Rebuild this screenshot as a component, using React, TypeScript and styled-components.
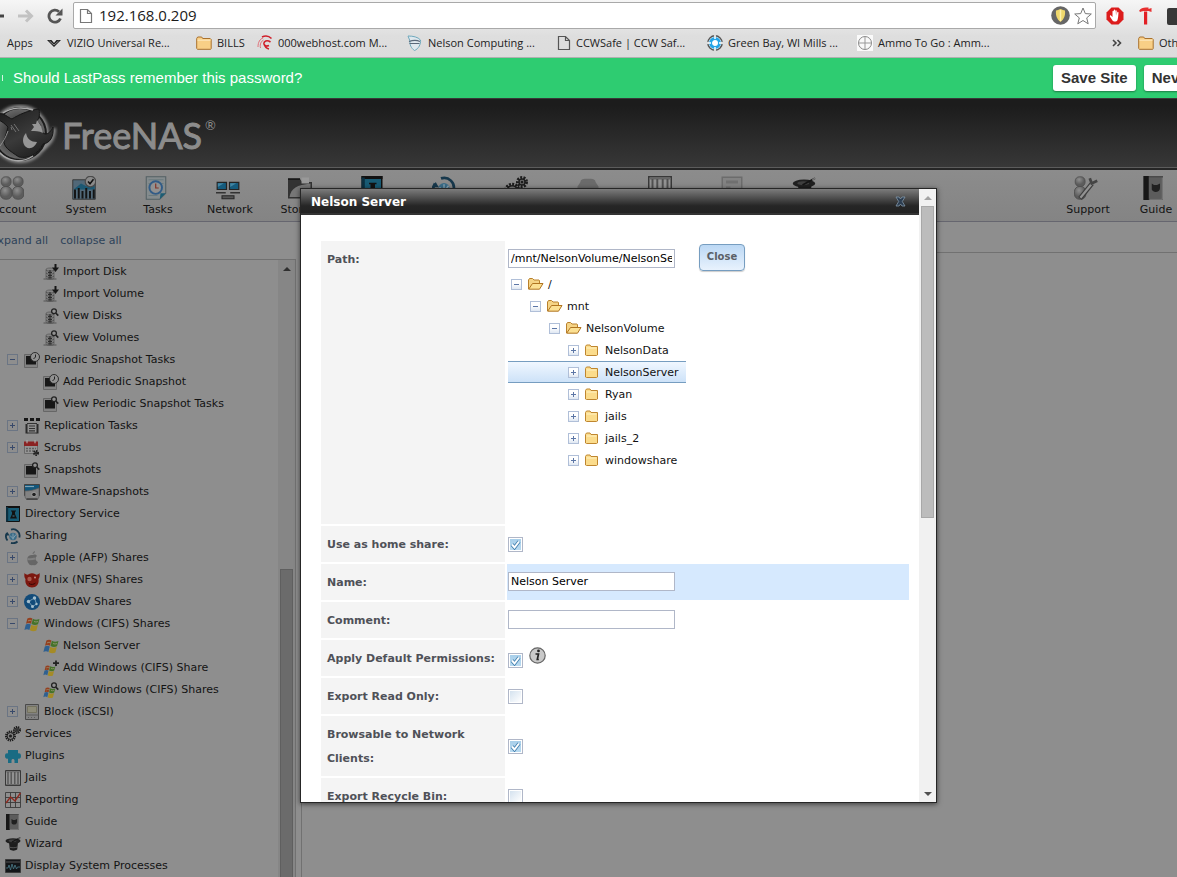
import React from 'react';
import styled, { createGlobalStyle } from 'styled-components';

const GlobalStyle = createGlobalStyle`
  *, *::before, *::after { box-sizing: border-box; }
  html, body { margin: 0; background: #8e8e8e; }
  body { overflow: hidden; font: 11px/22px Verdana, "DejaVu Sans", sans-serif; color: #131313; }
  button, input { font-family: inherit; margin: 0; }
  a { color: inherit; text-decoration: none; }
  svg { display: block; flex: none; }
`;

const Shell = styled.div`
  display: flex;
  flex-direction: column;
  min-height: 100vh;
  overflow: hidden;
`;

/* ---------- browser chrome ---------- */

const BrowserBar = styled.header`
  background: linear-gradient(#f6f6f6, #dedede 36px, #dcdcdc);
  border-bottom: 1px solid #b0b0b0;
  font-family: "Open Sans", sans-serif;
  color: #222;
`;

const NavRow = styled.div`
  display: flex;
  align-items: center;
  height: 31px;
  overflow: hidden;
`;

const NavButton = styled.button`
  border: 0;
  padding: 0;
  background: none;
  width: 29px;
  display: flex;
  justify-content: center;
  flex: none;
`;

const BackButton = styled(NavButton)`
  width: 11px;
  justify-content: flex-start;
`;

const AddressBox = styled.div`
  display: flex;
  align-items: center;
  flex: 1;
  height: 27px;
  margin-left: 4px;
  padding: 0 3px 0 5px;
  gap: 4px;
  background: #fff;
  border: 1px solid #a9a9a9;
  border-radius: 2px;
`;

const AddressInput = styled.input`
  flex: 1;
  min-width: 0;
  border: 0;
  outline: 0;
  padding: 0 0 2px 2px;
  background: none;
  font-size: 15px;
  color: #1a1a1a;
`;

const Extensions = styled.div`
  display: flex;
  align-items: center;
  gap: 14px;
  width: 81px;
  padding-left: 10px;
  overflow: hidden;
`;

const BookmarkRow = styled.nav`
  display: flex;
  align-items: center;
  height: 26px;
  padding-bottom: 2px;
  overflow: hidden;
  line-height: 20px;
`;

const Bookmark = styled.a<{ $size?: 'short' | 'wide' }>`
  display: flex;
  align-items: center;
  gap: 5px;
  flex: none;
  white-space: nowrap;
  font-size: 11px;
  width: ${p => (p.$size === 'wide' ? '150px' : p.$size === 'short' ? '61px' : 'auto')};
`;

const AppsLink = styled(Bookmark)`
  width: 46px;
  padding-left: 7px;
`;

const BookmarkTail = styled.div`
  display: flex;
  align-items: center;
  flex: none;
  margin-left: auto;
  width: 65px;
  gap: 8px;
`;

const TailDivider = styled.span`
  width: 1px;
  height: 24px;
  background: #c3c9cf;
`;

const SaveBar = styled.div`
  display: flex;
  align-items: center;
  height: 40px;
  padding-bottom: 1px;
  background: #2ecc71;
  color: #fff;
  font: 15px/20px "Liberation Sans", Arial, sans-serif;
  overflow: hidden;
`;

const SaveMark = styled.span`
  width: 3px;
  height: 6px;
  margin-right: 10px;
  border-right: 1px solid #d5f5e3;
`;

const SaveActions = styled.div`
  display: flex;
  gap: 8px;
  flex: none;
  width: 124px;
  margin-left: auto;
`;

const SaveButton = styled.button`
  flex: none;
  height: 26px;
  padding: 0 8px;
  border: 0;
  border-radius: 3px;
  background: #fff;
  box-shadow: 0 1px 2px rgba(0, 0, 0, 0.4);
  color: #333;
  font-size: 15px;
  font-weight: 700;
  white-space: nowrap;
`;

/* ---------- admin page ---------- */

const Page = styled.div`
  position: relative;
  flex: 1;
  display: flex;
  flex-direction: column;
  overflow: hidden;
`;

const Banner = styled.div`
  display: flex;
  align-items: center;
  gap: 3px;
  height: 72px;
  padding-top: 2px;
  background: linear-gradient(#1c1c1c 10%, #383838);
  border-top: 1px solid #383838;
  border-bottom: 2px solid #262626;
  box-shadow: inset 0 -1px 0 #5c5c5c;
`;

const BrandName = styled.span`
  font: 36px/44px Lato, sans-serif;
  color: #8c8c8c;
  -webkit-text-stroke: 1px #8c8c8c;
`;

const BrandMark = styled.sup`
  align-self: flex-start;
  margin-top: 14px;
  font: 13px/20px Lato, sans-serif;
  color: #8c8c8c;
`;

const Toolbar = styled.nav`
  display: flex;
  height: 52px;
  padding-top: 6px;
  margin: 0 -13px 0 -22px;
  background: linear-gradient(#8c8c8c, #848484);
  border-bottom: 1px solid #66666f;
`;

const Tool = styled.a<{ $width?: number }>`
  display: flex;
  flex-direction: column;
  align-items: center;
  gap: 2px;
  flex: none;
  width: ${p => p.$width ?? 72}px;
  line-height: 16px;
  & > svg { margin-right: 4px; }
`;

const ToolSpacer = styled.span`
  flex: 1;
`;

const Columns = styled.div`
  display: flex;
  flex: 1;
`;

const SideColumn = styled.aside`
  display: flex;
  flex-direction: column;
  width: 296px;
  flex: none;
`;

const TreeActions = styled.div`
  display: flex;
  gap: 12px;
  height: 37px;
  align-items: center;
  margin-left: -9px;
  color: #2d4259;
`;

const TreePane = styled.div`
  display: flex;
  flex: 1;
  border-top: 1px solid #707070;
  border-right: 1px solid #717171;
`;

const NavTree = styled.ul`
  flex: 1;
  min-width: 0;
  margin: 0;
  padding: 0;
  list-style: none;
`;

const NavItem = styled.li<{ $level: number }>`
  display: flex;
  align-items: center;
  height: 22px;
  padding-left: ${p => (p.$level > 1 ? 24 : 5)}px;
  white-space: nowrap;
`;

const NavLink = styled.a`
  display: flex;
  align-items: center;
  gap: 4px;
  padding-top: 2px;
`;

const Slot = styled.span`
  width: 19px;
  padding-left: 2px;
  flex: none;
`;

const ExpandButton = styled.button<{ $dim?: boolean }>`
  display: flex;
  align-items: center;
  justify-content: center;
  width: 11px;
  height: 11px;
  flex: none;
  padding: 0;
  color: ${p => (p.$dim ? '#38496a' : '#5c76a6')};
  background: ${p => (p.$dim ? '#8e8e8e' : 'linear-gradient(#ffffff 40%, #dfe7f2)')};
  border: 1px solid ${p => (p.$dim ? '#6b7584' : '#b0bfd8')};
`;

const MainColumn = styled.main`
  flex: 1;
  margin-left: 5px;
  border-left: 1px solid #717171;
`;

const TabStrip = styled.div`
  height: 31px;
  border-bottom: 1px solid #717171;
`;

/* ---------- scroll bars ---------- */

const ScrollTrack = styled.div<{ $dim?: boolean }>`
  display: flex;
  flex-direction: column;
  align-items: center;
  justify-content: space-between;
  width: 17px;
  flex: none;
  background: ${p => (p.$dim ? '#868686' : '#f1f1f1')};
  color: ${p => (p.$dim ? '#2f2f2f' : '#505050')};
`;

const ScrollArrow = styled.span<{ $down?: boolean; $faint?: boolean }>`
  display: flex;
  align-items: center;
  justify-content: center;
  height: 17px;
  &::before {
    content: "";
    border: 4px solid transparent;
    border-top-width: ${p => (p.$down ? 4 : 0)}px;
    border-bottom-width: ${p => (p.$down ? 0 : 4)}px;
    border-${p => (p.$down ? 'top' : 'bottom')}-color: ${p => (p.$faint ? '#a3a3a3' : 'currentColor')};
  }
`;

const DialogThumb = styled.span`
  width: 13px;
  height: 312px;
  margin-bottom: auto;
  background: #bcbcbc;
  border: 1px solid #a8a8a8;
`;

const TreeThumb = styled.span`
  width: 13px;
  height: 50%;
  background: #6b6b6b;
  border: 1px solid #5f5f5f;
  border-bottom: 0;
`;

/* ---------- dialog ---------- */

const Dialog = styled.section`
  position: absolute;
  top: 90px;
  left: 300px;
  display: flex;
  width: 637px;
  height: 615px;
  background: #fff;
  border: 1px solid #262626;
  box-shadow: 0 1px 5px rgba(0, 0, 0, 0.6);
`;

const DialogBody = styled.div`
  flex: 1;
  min-width: 0;
  overflow: hidden;
`;

const DialogTitle = styled.div`
  display: flex;
  align-items: center;
  justify-content: space-between;
  height: 26px;
  padding: 0 13px 0 10px;
  background: linear-gradient(#7c7c7c, #262626 70%, #222);
  border-bottom: 2px solid #333;
`;

const DialogHeading = styled.h1`
  margin: 0;
  padding-top: 2px;
  font-size: 12px;
  line-height: 22px;
  font-weight: 700;
  color: #fff;
`;

const DialogClose = styled.button`
  padding: 0;
  border: 0;
  background: none;
`;

const Form = styled.form`
  display: grid;
  gap: 2px;
  padding: 26px 10px 0 20px;
`;

const FormRow = styled.div<{ $tall?: boolean }>`
  display: grid;
  grid-template-columns: 184px 1fr;
  gap: 2px;
  min-height: ${p => (p.$tall ? 283 : 36)}px;
`;

const Label = styled.label`
  padding: 7px 6px 5px;
  background: #f4f4f4;
  color: #4f5158;
  font-weight: 700;
  line-height: 24px;
`;

const Field = styled.div<{ $active?: boolean }>`
  display: flex;
  align-items: center;
  padding-left: 1px;
  min-width: 0;
  background: ${p => (p.$active ? '#d6e9fe' : 'transparent')};
`;

const PathField = styled.div`
  padding: 3px 0 0 1px;
`;

const PathLine = styled.div`
  display: flex;
  align-items: flex-end;
  gap: 24px;
  height: 29px;
  padding-bottom: 2px;
`;

const TextInput = styled.input`
  width: 167px;
  height: 19px;
  margin-bottom: 1px;
  padding: 0 2px;
  border: 1px solid #b0b7c8;
  background: #fff;
  color: #000;
  font-size: 11px;
  outline: 0;
`;

const PathInput = styled(TextInput)`
  margin-bottom: 3px;
`;

const CloseButton = styled.button`
  width: 46px;
  height: 27px;
  padding: 0 0 2px;
  border: 1px solid #769dc0;
  border-radius: 4px;
  background: linear-gradient(#bcd8f4, #e8f2fd);
  box-shadow: 0 1px 1px rgba(0, 0, 0, 0.2);
  color: #5a5f66;
  font-size: 10px;
  font-weight: 700;
`;

const checkMark =
  "url(\"data:image/svg+xml,%3Csvg xmlns='http://www.w3.org/2000/svg' viewBox='0 0 11 11'%3E%3Cpath d='M2 5.5l2.5 3L9 2.5' fill='none' stroke='%23417fae' stroke-width='3.6'/%3E%3Cpath d='M2 5.5l2.5 3L9 2.5' fill='none' stroke='white' stroke-width='2'/%3E%3C/svg%3E\")";

const CheckBox = styled.input.attrs({ type: 'checkbox' })`
  appearance: none;
  width: 15px;
  height: 15px;
  flex: none;
  padding: 1px;
  border: 1px solid #b0b7c8;
  background: linear-gradient(135deg, #d4e2ef, #fff) content-box #fff;
  &:checked {
    background: ${checkMark} content-box, linear-gradient(#a8cfea, #b9daf0) content-box #fff;
  }
`;

const CheckWithHelp = styled.span`
  display: flex;
  align-items: flex-end;
  gap: 6px;
  height: 21px;
  margin-bottom: 1px;
  & > button { align-self: flex-start; }
`;

const HelpButton = styled.button`
  padding: 0;
  border: 0;
  background: none;
`;

const FolderTree = styled.ul`
  width: 178px;
  margin: 0;
  padding: 0;
  list-style: none;
`;

const FolderRow = styled.li<{ $level: number; $selected?: boolean }>`
  display: flex;
  align-items: center;
  height: 22px;
  padding-left: ${p => 3 + p.$level * 19}px;
  border: solid ${p => (p.$selected ? '#769dc0' : 'transparent')};
  border-width: 1px 0;
  background: ${p => (p.$selected ? 'linear-gradient(#f0f7ff, #cde2f8)' : 'none')};
  white-space: nowrap;
  color: #111;
  & > svg { margin: 0 4px 0 6px; }
`;

const FolderName = styled.span`
  padding-top: 2px;
  line-height: 18px;
`;

/* ---------- drawings ---------- */

const Svg = ({ size = 16, children }: { size?: number; children: React.ReactNode }) => (
  <svg width={size} height={size} viewBox="0 0 16 16" fill="none" aria-hidden="true">{children}</svg>
);

const discs = (
  <>
    <path d="M3 5.5c0-2 8-2 8 0V14c0 2-8 2-8 0z" fill="#858585" stroke="#5a5a5a" strokeWidth=".8" />
    <path d="M3 6c1 1.6 7 1.6 8 0M3 9c1 1.6 7 1.6 8 0M3 12c1 1.6 7 1.6 8 0" stroke="#444" strokeWidth=".8" />
    <path d="M7 6v9M5 8.5h4M5 11.5h4M5 14h4" stroke="#2d2d2d" strokeWidth="1.1" />
    <path d="M.5 15h13" stroke="#555" />
  </>
);
const lens = (
  <>
    <circle cx="11" cy="3.2" r="2.4" stroke="#222" strokeWidth="1.3" fill="#929292" />
    <path d="M12.7 5l2.6 2.6" stroke="#222" strokeWidth="1.7" />
  </>
);
const photo = (
  <>
    <path d="M.5 2.5h13v13H.5z" fill="#828282" stroke="#666" />
    <path d="M2 4h10v8.5H2z" fill="#171717" />
  </>
);
const winFlag = (
  <>
    <path d="M3.4 2.500c1.800-1 3.500-1 5 0L7 7.800C5.400 6.800 3.700 6.800 2 7.800z" fill="#94401f" />
    <path d="M8.900 2.800c2 1.200 4 1.200 6.600.2L14 8.200c-2 1-4 1-6.500-.1z" fill="#45732a" />
    <path d="M1.800 8.400c1.800-1 3.500-1 5 0L5.400 14c-1.600-1-3.400-1-5 0z" fill="#2f6090" />
    <path d="M7.300 8.800c2 1.100 4 1.100 6.500.1l-1.400 5.500c-2 1-4 1-6.500-.1z" fill="#a58b26" />
    <path d="M4 5c1.200-.8 2.500-.8 3.500-.2M10 5.500c1.500.6 2.800.6 4 0" stroke="#9f9a7c" strokeWidth=".8" />
  </>
);
const smallFlag = <g transform="translate(0 4) scale(.8)">{winFlag}</g>;
const gear = (cx: number, cy: number, r: number) => (
  <>
    <circle cx={cx} cy={cy} r={r} stroke="#1d1d1d" strokeWidth="2" strokeDasharray="1.300 .8" />
    <circle cx={cx} cy={cy} r={r - 1} fill="#7c7c7c" stroke="#1d1d1d" strokeWidth="1" />
    <circle cx={cx} cy={cy} r={r / 3} fill="#1d1d1d" />
  </>
);
const bars = (
  <>
    <path d="M.5.5h15v15H.5z" fill="#929292" stroke="#383838" />
    <path d="M1 1.800h14M1 14.600h14" stroke="#666" />
    <path d="M3 2v12M6.200 2v12M9.800 2v12M13 2v12" stroke="#505050" strokeWidth="1.300" />
  </>
);
const bookCat = (
  <>
    <path d="M1.500.5h12v15h-12z" fill="#5c5c5c" stroke="#4a4a4a" />
    <path d="M1 0h3.500v16H1z" fill="#171717" />
    <path d="M6.500 5l1.500 1h2l2-1v3c0 3-4.500 3.500-5.500 1z" fill="#202020" />
    <path d="M13.500 1v14.500H5" stroke="#7c7c7c" strokeWidth=".8" />
  </>
);
const hat = (
  <>
    <path d="M4 6h9l-.8 7.500c-2 1.500-5.500 1.500-7.400 0z" fill="#1c1c1c" />
    <ellipse cx="8" cy="5" rx="7.500" ry="2.700" fill="#202020" />
    <ellipse cx="7.500" cy="4.800" rx="4" ry="1.300" fill="#404040" />
    <path d="M7 6l8.300-4.500" stroke="#151515" strokeWidth="1.200" />
    <path d="M13.500 2.500l2-1" stroke="#777" />
    <path d="M4.300 11c2 1 5.500 1 8 0" stroke="#555" />
  </>
);
const book = (
  <>
    <path d="M1.500.5h13v15h-13z" fill="#185b74" stroke="#111" />
    <path d="M1 0h14v2H1z" fill="#111" />
    <path d="M1 1h2.200v14.500H1z" fill="#0c3040" />
    <path d="M6 4.500h5v1h-1v2.500l2 4.500H5l2-4.500V5.500H6z" fill="#121212" />
    <path d="M7.500 10h2" stroke="#3a7f98" />
  </>
);
const sharing = (
  <>
    <path d="M2.500 12.500A6.500 6.500 0 0 1 2 5M6 1.600a6.500 6.500 0 0 1 8.300 8M12.500 13.500a6.500 6.500 0 0 1-6.500 1.300" stroke="#17384c" strokeWidth="1.800" />
    <circle cx="8" cy="8.500" r="3.800" fill="#3a6c88" />
    <path d="M5 7.500l3 3 3-4M8 5.500v6" stroke="#8ba5b3" strokeWidth=".9" />
    <path d="M0 7.500h4.500L2.500 4z" fill="#17384c" />
  </>
);
const person = (x: number) => (
  <>
    <rect x={x + 0.3} y="7" width="7.600" height="8.500" rx="3.300" fill="url(#person)" stroke="#484848" strokeWidth=".5" />
    <rect x={x + 0.8} y=".5" width="6.600" height="6.500" rx="2.800" fill="url(#person)" stroke="#4c4c4c" strokeWidth=".5" />
  </>
);

const art: Record<string, React.ReactNode> = {
  importDisk: <>{discs}<path d="M12.500 0v4.500" stroke="#161616" strokeWidth="2" /><path d="M9 3.500h7L12.500 8z" fill="#161616" /></>,
  viewDisk: <>{discs}{lens}</>,
  periodic: <>{photo}<circle cx="11" cy="5" r="4.500" fill="#919191" stroke="#222" strokeWidth=".9" /><path d="M11.500 2.500V5L9.500 7" stroke="#222" /></>,
  snapshot: <>{photo}{lens}</>,
  replication: <><path d="M0 0h4v3H0zM6 0h4v3H6zM12 0h4v3h-4z" fill="#161616" /><path d="M2.500 6v9.500M13.500 6v9.500" stroke="#2b2b2b" strokeWidth="2" /><path d="M4 5.500h8V15H4z" fill="#909090" /><path d="M3 5.500h10M5 8h6M5 10.500h6M3 15h10M5 12.800h6" stroke="#333" strokeWidth="1.200" /></>,
  scrubs: <><path d="M.5 2.500h13v11H.5z" fill="#949494" stroke="#6b6b6b" /><path d="M0 1.500h14V6H0z" fill="#8b2323" /><path d="M3 .3v3M11 .3v3" stroke="#bbb" /><path d="M2 8.500h10M2 11h9" stroke="#606060" strokeWidth="1.400" strokeDasharray="2 1" />{gear(12, 13, 2)}</>,
  vmware: <><path d="M.5.500h15v11H.5z" fill="#12567a" stroke="#424242" /><path d="M1 2.500h9" stroke="#7fa3b6" strokeWidth="1.200" /><path d="M1 7c5 0 9-1 14-3v9l-1.500 2.500h-11L1 13z" fill="#828282" stroke="#5a5a5a" strokeWidth=".7" /><path d="M2.500 15h11" stroke="#333" strokeWidth="1.300" /><circle cx="10" cy="10.500" r="2.300" fill="#222" stroke="#a0a0a0" /></>,
  directory: book,
  sharing,
  apple: <><path d="M8.500 5c2-1 4-.5 4.500 1-2.500 1.500-1.500 5 1 6-1.500 3.500-3 3.500-5 3-2 .5-3.500.5-5-2.500-1.500-4-.5-8 4.500-7.500z" fill="#666" /><path d="M8.500 4c0-1.500 1-2.500 2.500-3 0 1.800-1 2.800-2.500 3z" fill="#6c6c6c" /><path d="M3.500 9c3 .5 5 .3 7.500-.5" stroke="#808080" strokeWidth="2" /></>,
  bsd: <><path d="M.5 1C2 3 4 3 5 2c2-1 4-1 6 0 1 1 3 1 4.500-1 .5 3 0 5-1 6 1 5-2.500 8.500-6.500 8.500S.500 12 1.500 7C.5 6 0 4 .5 1z" fill="#7c170f" /><circle cx="5.500" cy="7" r="2.200" fill="#a8574c" /><circle cx="11" cy="5.500" r="1" fill="#c28c84" /><path d="M5 11.500c2 1.500 5 1 6.500-.5" stroke="#350705" /></>,
  webdav: <><circle cx="8" cy="8" r="8" fill="#124b79" /><path d="M4.500 7.500l6-3.500M4.500 7.500l4 5M10.500 4l2 6-4 2.500" stroke="#7ea3bb" strokeWidth=".9" /><g fill="#a4bdcb"><circle cx="4.500" cy="7.500" r="1.700" /><circle cx="10.500" cy="4" r="1.700" /><circle cx="8.500" cy="12.500" r="1.500" /><circle cx="12.500" cy="10" r="1.200" /></g></>,
  windows: winFlag,
  winAdd: <>{smallFlag}<path d="M13 .500v5.500M10 3.200h6" stroke="#222" strokeWidth="1.800" /></>,
  winView: <>{smallFlag}{lens}</>,
  block: <><path d="M1.500.500h13v15h-13z" fill="#818181" stroke="#4a4a4a" /><path d="M3.500 2.500h9v6h-9z" fill="#8d8b78" stroke="#74725f" /><path d="M1.500 11h13M4 13.500h1M7 13.500h1M10 13.500h1" stroke="#5c5c5c" /></>,
  services: <>{gear(5.500, 10, 4.500)}{gear(12, 4, 3)}</>,
  plugins: <path d="M3 2h10v3.500c1.500-.5 3 0 3 2.500s-1.500 3-3 2.500V15H9.500v-2.500c0-2-3-2-3 0V15H3v-4.500C1.500 11 0 10.500 0 8s1.500-3 3-2.500z" fill="#196b83" />,
  jails: bars,
  reporting: <><path d="M.5.500h15v15H.5zM.5 5.500h15M.5 10.500h15M5.500.500v15M10.500.500v15" stroke="#3a3a3a" strokeWidth=".9" /><path d="M1 11l4.500-6L10 9l5.500-8" stroke="#8d2a20" strokeWidth="1.400" /></>,
  guide: bookCat,
  wizard: hat,
  processes: <><path d="M.500 1.500h15v13H.5z" fill="#131518" stroke="#3a3a3a" /><path d="M1 4h14" stroke="#555" /><path d="M1 10h2l1-3 1.500 5L7 6l1.500 5 1.500-4 1.500 4 1-2h2.500" stroke="#45717e" strokeWidth=".9" /></>,
  account: <>{person(0)}{person(8)}</>,
  system: <><path d="M.500 2.500h15v13H.5z" fill="#516878" stroke="#333" strokeWidth=".6" /><path d="M1 9l5-4 4 2 5-4v6z" fill="#1b5873" /><path d="M2 9v6M4.500 8v7M7 10v5M9.500 8v7M12 10v5M14.500 9v6" stroke="#141414" strokeWidth="1.300" /><circle cx="12.300" cy="3.700" r="3.500" fill="#8a8a8a" stroke="#4a4a4a" strokeWidth=".8" /><path d="M10.700 3.700l1.300 1.500 2.300-3" stroke="#111" /></>,
  tasks: <><path d="M1.500.500h13v11l-4 4h-9z" fill="#848b8d" stroke="#536064" strokeWidth=".7" /><path d="M3 2.500h10M3 5h10M3 13h6" stroke="#66777c" strokeWidth=".6" /><circle cx="7.800" cy="7.700" r="4.200" fill="#919191" stroke="#325c87" strokeWidth="1.300" /><path d="M7.800 5v3h2" stroke="#843427" strokeWidth=".8" /><path d="M10.500 15.500l.5-4h3.500z" fill="#1c5d75" /></>,
  network: <><path d="M.800 4.300h6.200v4.700H.8zM9 4.300h6.200V9H9z" fill="#155b7d" stroke="#242424" strokeWidth=".8" /><path d="M1.200 4.800h4l-4 2.500zM9.500 4.800h4l-4 2.500z" fill="#4285a3" /><path d="M0 11.200h6.500M9.500 11.200H16" stroke="#333" strokeWidth="1" /><path d="M4 13.200h8v2H4z" fill="#555" stroke="#272727" strokeWidth=".7" /></>,
  storage: <><path d="M0 2h8l1.500 2H16v11H0z" fill="#333" /><path d="M9 1h5v4H9z" fill="#999" /><path d="M1 14C2 8 6 6 15 5v9z" fill="#777" /><path d="M0 2h8" stroke="#111" /></>,
  pluginsGray: <path d="M3 4c0-2 2-2.200 5-2.200S13 2 13 4l2 3v7H1V7z" fill="#6b6b6b" />,
  reportGray: <><path d="M1.500.8h13v13h-13z" fill="#838383" stroke="#6c6c6c" /><path d="M4 3h8v2H4zM4 7h3v3H4z" fill="#707070" /><path d="M8 8.500h5M8 10.500h5" stroke="#707070" /></>,
  support: <>{person(0)}<path d="M4 15L12 5" stroke="#3d3d3d" strokeWidth="3" /><path d="M4.300 14.500L12 5" stroke="#929292" strokeWidth="1.500" /><path d="M10.500 1.500l1.300 3.500 3.700-1.800" stroke="#444" strokeWidth="1.800" /></>,
};

const Icon = ({ name, size }: { name: string; size?: number }) => <Svg size={size}>{art[name]}</Svg>;

const Expander = ({ open, dim, label }: { open?: boolean; dim?: boolean; label: string }) => (
  <ExpandButton type="button" $dim={dim} aria-label={`${open ? 'Collapse' : 'Expand'} ${label}`}>
    <svg width="5" height="5" viewBox="0 0 5 5"><path d={open ? 'M0 2.500h5' : 'M0 2.500h5M2.500 0v5'} stroke="currentColor" /></svg>
  </ExpandButton>
);

const Folder = ({ open }: { open?: boolean }) => (
  <Svg>
    {open ? (
      <>
        <path d="M.500 13V4l1-1.500h3L6 4h5l.5.500V8" fill="#f5d486" stroke="#b9802c" />
        <path d="M.700 13.200L4.500 7.500h10.500l-3.500 5.700z" fill="#fbe093" stroke="#b07420" />
      </>
    ) : (
      <>
        <path d="M.500 13V4.500l1-1.500H5l1 1.500h6.500v8.500l-1 .5h-10z" fill="#fbdc8c" stroke="#bf862f" />
        <path d="M1.500 6h10" stroke="#fff2c4" />
      </>
    )}
  </Svg>
);

const BookmarkFolder = () => (
  <svg width="16" height="14" viewBox="0 0 16 14"><path d="M.700 2.500l1-1.500h4l1 1.500h7.500l1 1v9l-.5.800H1.500l-.8-.800z" fill="#f8cf86" stroke="#a9712d" /><path d="M1.500 4.200h13" stroke="#fde9c2" /></svg>
);

const PageIcon = ({ color = '#555' }: { color?: string }) => (
  <svg width="14" height="16" viewBox="0 0 14 16"><path d="M1.500 1.500h7l4 4v9h-11zM8.500 1.500v4h4" fill="none" stroke={color} strokeWidth="1.200" /></svg>
);

const Mascot = () => (
  <svg width="59" height="62" viewBox="0 0 59 62" aria-hidden="true">
    <defs>
      <radialGradient id="disc"><stop offset=".4" stopColor="#333" /><stop offset="1" stopColor="#6a6a6a" /></radialGradient>
      <linearGradient id="face" x1="0" y1="0" x2=".6" y2="1"><stop stopColor="#1b1b1b" /><stop offset=".6" stopColor="#3a3a3a" /><stop offset="1" stopColor="#222" /></linearGradient>
      <radialGradient id="person" cx=".4" cy=".3"><stop stopColor="#8f8f8f" /><stop offset="1" stopColor="#5c5c5c" /></radialGradient>
      <filter id="glow" x="-30%" y="-30%" width="160%" height="160%"><feGaussianBlur stdDeviation="1.500" /></filter>
    </defs>
    <circle cx="20" cy="30" r="27" fill="none" stroke="#929292" strokeWidth="4" filter="url(#glow)" />
    <path d="M41 45c8-4 13-10 13-21" fill="none" stroke="#8d8d8d" strokeWidth="4" filter="url(#glow)" />
    <circle cx="20" cy="30" r="26" fill="url(#disc)" stroke="#1c1c1c" strokeWidth="2" />
    <path d="M-2 10C4 8 8 14 12 15c6-4 17-9 27-10 1 7 0 9-2 12l4 5-3 2c3 2 4 5 7 6 4 0 6-3 8-7 1 10-3 16-10 17-5 10-14 15-24 13C10 47 3 43 4 36c2-5 3-9 4-13-3-3-6-6-10-7z" fill="url(#face)" stroke="#161616" />
    <path d="M37 16l4 6 2 7c-4-2-8-2-12-2l3-4-2-3 4 0z" fill="#969696" />
    <path d="M26 29c-4 4-4 11 0 14 4 3 9 0 11-5-6 0-10-3-11-9z" fill="#969696" />
    <path d="M11 21l5 7M14 20l5 7M12 26l-1-3" stroke="#737373" />
    <path d="M8 27C6 33 3 38 0 42" stroke="#8f8f8f" fill="none" />
    <path d="M-1 48c8 9 22 12 34 4" stroke="#aaa" strokeWidth="1.500" fill="none" />
    <path d="M3 9C12 3 24 3 33 6" stroke="#aaa" strokeWidth="1.500" fill="none" />
  </svg>
);

/* ---------- data ---------- */

type Node = [level: number, icon: string, label: string, state?: 'open' | 'closed'];

const navNodes: Node[] = [
  [2, 'importDisk', 'Import Disk'],
  [2, 'importDisk', 'Import Volume'],
  [2, 'viewDisk', 'View Disks'],
  [2, 'viewDisk', 'View Volumes'],
  [1, 'periodic', 'Periodic Snapshot Tasks', 'open'],
  [2, 'periodic', 'Add Periodic Snapshot'],
  [2, 'snapshot', 'View Periodic Snapshot Tasks'],
  [1, 'replication', 'Replication Tasks', 'closed'],
  [1, 'scrubs', 'Scrubs', 'closed'],
  [1, 'snapshot', 'Snapshots'],
  [1, 'vmware', 'VMware-Snapshots', 'closed'],
  [0, 'directory', 'Directory Service'],
  [0, 'sharing', 'Sharing'],
  [1, 'apple', 'Apple (AFP) Shares', 'closed'],
  [1, 'bsd', 'Unix (NFS) Shares', 'closed'],
  [1, 'webdav', 'WebDAV Shares', 'closed'],
  [1, 'windows', 'Windows (CIFS) Shares', 'open'],
  [2, 'windows', 'Nelson Server'],
  [2, 'winAdd', 'Add Windows (CIFS) Share'],
  [2, 'winView', 'View Windows (CIFS) Shares'],
  [1, 'block', 'Block (iSCSI)', 'closed'],
  [0, 'services', 'Services'],
  [0, 'plugins', 'Plugins'],
  [0, 'jails', 'Jails'],
  [0, 'reporting', 'Reporting'],
  [0, 'guide', 'Guide'],
  [0, 'wizard', 'Wizard'],
  [0, 'processes', 'Display System Processes'],
];

const tools: { icon: string; label: string; iconOnly?: boolean }[] = [
  { icon: 'account', label: 'Account' },
  { icon: 'system', label: 'System' },
  { icon: 'tasks', label: 'Tasks' },
  { icon: 'network', label: 'Network' },
  { icon: 'storage', label: 'Storage' },
  { icon: 'directory', label: 'Directory', iconOnly: true },
  { icon: 'sharing', label: 'Sharing', iconOnly: true },
  { icon: 'services', label: 'Services', iconOnly: true },
  { icon: 'pluginsGray', label: 'Plugins', iconOnly: true },
  { icon: 'jails', label: 'Jails', iconOnly: true },
  { icon: 'reportGray', label: 'Reporting', iconOnly: true },
  { icon: 'wizard', label: 'Wizard', iconOnly: true },
];

const folders: { level: number; name: string; open?: boolean; selected?: boolean }[] = [
  { level: 0, name: '/', open: true },
  { level: 1, name: 'mnt', open: true },
  { level: 2, name: 'NelsonVolume', open: true },
  { level: 3, name: 'NelsonData' },
  { level: 3, name: 'NelsonServer', selected: true },
  { level: 3, name: 'Ryan' },
  { level: 3, name: 'jails' },
  { level: 3, name: 'jails_2' },
  { level: 3, name: 'windowshare' },
];

/* ---------- sections ---------- */

const Browser = () => (
  <BrowserBar>
    <NavRow>
      <BackButton aria-label="Back"><svg width="5" height="16" viewBox="0 0 5 16"><path d="M0 8h4" stroke="#444" strokeWidth="3" /></svg></BackButton>
      <NavButton aria-label="Forward"><svg width="16" height="16" viewBox="0 0 16 16"><path d="M0 8h13M8 2.500L13.500 8 8 13.500" fill="none" stroke="#c2c2c2" strokeWidth="3" /></svg></NavButton>
      <NavButton aria-label="Reload"><svg width="16" height="16" viewBox="0 0 16 16"><path d="M13.500 10.500A6 6 0 1 1 12 3.700" fill="none" stroke="#555" strokeWidth="2.800" /><path d="M15.500.500v7h-7z" fill="#555" /></svg></NavButton>
      <AddressBox>
        <PageIcon color="#777" />
        <AddressInput aria-label="Address" defaultValue="192.168.0.209" />
        <svg width="19" height="19" viewBox="0 0 19 19"><circle cx="9.500" cy="9.500" r="9.300" fill="#666" /><path d="M9.500 3c2 1 3 1 4.500 1.500.5 5-.8 8.500-4.500 11.500C5.800 13 4.500 9.500 5 4.500c1.500-.5 2.500-.5 4.500-1.500z" fill="#f0d86c" /><path d="M9.500 4v11" stroke="#fff2ad" strokeWidth="1.500" /></svg>
        <svg width="18" height="18" viewBox="0 0 18 18"><path d="M9 1l2.300 5.600 6 .4-4.600 3.900 1.500 5.900L9 13.500l-5.200 3.300 1.500-5.900L.700 7l6-.4z" fill="#fff" stroke="#777" /></svg>
      </AddressBox>
      <Extensions>
        <svg width="18" height="18" viewBox="0 0 18 18"><path d="M5.500.500h7l5 5v7l-5 5h-7l-5-5v-7z" fill="#dc1c1c" /><path d="M5 8.500l1.500 1.500V4.500c0-1 1.300-1 1.300 0V8 3.300c0-1 1.400-1 1.400 0V8l.2-4c0-1 1.300-1 1.300 0v4.500l.5-3c.2-1 1.300-.8 1.300.2-.2 3-.3 5-1 7.300-.7 2-4 2-5 .5L4 9.800c-.4-1 .3-1.800 1-1.300z" fill="#fff" /></svg>
        <svg width="15" height="18" viewBox="0 0 15 18"><path d="M1 4c1.500-3 4-3.500 7-3.500h2.500V2l3-1v4l-3-1H8C5 4 3.500 4 2.500 5z" fill="#e83030" /><path d="M6 4.500h3.200v13H6z" fill="#e21f25" /></svg>
        <svg width="17" height="18" viewBox="0 0 17 18"><rect x="0" y="1" width="17" height="17" rx="2" fill="#383838" /></svg>
      </Extensions>
    </NavRow>
    <BookmarkRow aria-label="Bookmarks">
      <AppsLink href="#">Apps</AppsLink>
      <Bookmark href="#" $size="wide">
        <svg width="16" height="16" viewBox="0 0 16 16"><path d="M1 5h4.500L8 8l2.500-3H15l-7 7z" fill="#222" /><path d="M3.500 6L8 10l4.500-4" stroke="#bbb" strokeWidth=".7" fill="none" /></svg>
        VIZIO Universal Re...
      </Bookmark>
      <Bookmark href="#" $size="short"><BookmarkFolder />BILLS</Bookmark>
      <Bookmark href="#" $size="wide">
        <svg width="16" height="16" viewBox="0 0 16 16"><path d="M5 2c3-1.500 7-1 9.500 1.500M13.500 7C10 4.500 6.500 6 7 9c.5 2 2.500 2.500 5 1.500M7 9c1 3 3 4.500 5 5" fill="none" stroke="#d0202b" strokeWidth="1.600" /><path d="M1 12c0-5 2-8 5-9M3.500 13c-1-4 1-7 3-8" fill="none" stroke="#e07078" strokeWidth="1" /></svg>
        000webhost.com M...
      </Bookmark>
      <Bookmark href="#" $size="wide">
        <svg width="16" height="16" viewBox="0 0 16 16"><path d="M1 1c5 0 10 1 12.500 4 .5 4-2 9-6 10.500C4 13 2.500 9.500 3 6z" fill="#dfe8ee" stroke="#6fa9bd" /><path d="M2 6.500c4-1.500 8-1.500 11 0M2.500 8.500h10" stroke="#5a6879" strokeWidth="1.200" fill="none" /></svg>
        Nelson Computing ...
      </Bookmark>
      <Bookmark href="#" $size="wide"><PageIcon />CCWSafe | CCW Saf...</Bookmark>
      <Bookmark href="#" $size="wide">
        <svg width="16" height="16" viewBox="0 0 16 16"><circle cx="8" cy="8" r="7.200" fill="#fff" stroke="#555" strokeWidth="1.400" /><circle cx="8" cy="8" r="4.500" fill="none" stroke="#25a5e8" strokeWidth="3" /><path d="M8 0v4M8 12v4M0 8h4M12 8h4" stroke="#fff" strokeWidth="1.500" /></svg>
        Green Bay, WI Mills ...
      </Bookmark>
      <Bookmark href="#" $size="wide">
        <svg width="16" height="16" viewBox="0 0 16 16"><path d="M0 0h16v16H0z" fill="#fafafa" /><circle cx="8" cy="8" r="6.500" fill="none" stroke="#888" /><path d="M8 1v14M1 8h14" stroke="#999" /></svg>
        Ammo To Go : Amm...
      </Bookmark>
      <BookmarkTail>
        <svg width="10" height="8" viewBox="0 0 10 8"><path d="M1 1l3 3-3 3M5.500 1l3 3-3 3" fill="none" stroke="#444" strokeWidth="1.600" /></svg>
        <TailDivider />
        <Bookmark href="#"><BookmarkFolder />Other bookmarks</Bookmark>
      </BookmarkTail>
    </BookmarkRow>
  </BrowserBar>
);

const ShareDialog = () => (
  <Dialog role="dialog" aria-labelledby="dialog-title">
    <DialogBody>
      <DialogTitle>
        <DialogHeading id="dialog-title">Nelson Server</DialogHeading>
        <DialogClose aria-label="Close dialog">
          <svg width="11" height="11" viewBox="0 0 11 11"><path d="M1 1h3l1.500 2L7 1h3L7.300 5.500 10 10H7L5.500 8 4 10H1l2.700-4.500z" fill="#2c3d50" stroke="#8297aa" strokeWidth=".8" /></svg>
        </DialogClose>
      </DialogTitle>
      <Form>
        <FormRow $tall>
          <Label htmlFor="path">Path:</Label>
          <PathField>
            <PathLine>
              <PathInput id="path" defaultValue="/mnt/NelsonVolume/NelsonServer" />
              <CloseButton type="button">Close</CloseButton>
            </PathLine>
            <FolderTree>
              {folders.map(f => (
                <FolderRow key={f.name} $level={f.level} $selected={f.selected}>
                  <Expander open={f.open} label={f.name} />
                  <Folder open={f.open} />
                  <FolderName>{f.name}</FolderName>
                </FolderRow>
              ))}
            </FolderTree>
          </PathField>
        </FormRow>
        <FormRow>
          <Label htmlFor="home">Use as home share:</Label>
          <Field><CheckBox id="home" defaultChecked /></Field>
        </FormRow>
        <FormRow>
          <Label htmlFor="name">Name:</Label>
          <Field $active><TextInput id="name" defaultValue="Nelson Server" /></Field>
        </FormRow>
        <FormRow>
          <Label htmlFor="comment">Comment:</Label>
          <Field><TextInput id="comment" /></Field>
        </FormRow>
        <FormRow>
          <Label htmlFor="permissions">Apply Default Permissions:</Label>
          <Field>
            <CheckWithHelp>
              <CheckBox id="permissions" defaultChecked />
              <HelpButton type="button" aria-label="Help">
                <svg width="17" height="17" viewBox="0 0 17 17"><circle cx="8.500" cy="8.500" r="7.700" fill="#c9c9c9" stroke="#666" strokeWidth="1.200" /><circle cx="9.500" cy="3.900" r="1.400" fill="#222" /><path d="M6.500 7h3L8.300 12.500h1.500" fill="none" stroke="#222" strokeWidth="1.700" /></svg>
              </HelpButton>
            </CheckWithHelp>
          </Field>
        </FormRow>
        <FormRow>
          <Label htmlFor="readonly">Export Read Only:</Label>
          <Field><CheckBox id="readonly" /></Field>
        </FormRow>
        <FormRow>
          <Label htmlFor="browsable">Browsable to Network Clients:</Label>
          <Field><CheckBox id="browsable" defaultChecked /></Field>
        </FormRow>
        <FormRow>
          <Label htmlFor="recycle">Export Recycle Bin:</Label>
          <Field><CheckBox id="recycle" /></Field>
        </FormRow>
      </Form>
    </DialogBody>
    <ScrollTrack>
      <ScrollArrow $faint />
      <DialogThumb />
      <ScrollArrow $down />
    </ScrollTrack>
  </Dialog>
);

export default function App() {
  return (
    <Shell>
      <GlobalStyle />
      <Browser />
      <SaveBar>
        <SaveMark />
        Should LastPass remember this password?
        <SaveActions>
          <SaveButton>Save Site</SaveButton>
          <SaveButton>Never...</SaveButton>
        </SaveActions>
      </SaveBar>
      <Page>
        <Banner>
          <Mascot />
          <BrandName>FreeNAS</BrandName>
          <BrandMark>®</BrandMark>
        </Banner>
        <Toolbar>
          {tools.map(({ icon, label, iconOnly }) => (
            <Tool href="#" key={label} aria-label={label}>
              <Icon name={icon} size={24} />
              {!iconOnly && label}
            </Tool>
          ))}
          <ToolSpacer />
          <Tool href="#" $width={68}><Icon name="support" size={24} />Support</Tool>
          <Tool href="#" $width={68}><Icon name="guide" size={24} />Guide</Tool>
        </Toolbar>
        <Columns>
          <SideColumn>
            <TreeActions><a href="#">expand all</a><a href="#">collapse all</a></TreeActions>
            <TreePane>
              <NavTree>
                {navNodes.map(([level, icon, label, state]) => (
                  <NavItem key={label} $level={level}>
                    {level > 0 && <Slot>{state && <Expander dim open={state === 'open'} label={label} />}</Slot>}
                    <NavLink href="#"><Icon name={icon} />{label}</NavLink>
                  </NavItem>
                ))}
              </NavTree>
              <ScrollTrack $dim>
                <ScrollArrow />
                <TreeThumb />
              </ScrollTrack>
            </TreePane>
          </SideColumn>
          <MainColumn><TabStrip /></MainColumn>
        </Columns>
        <ShareDialog />
      </Page>
    </Shell>
  );
}
